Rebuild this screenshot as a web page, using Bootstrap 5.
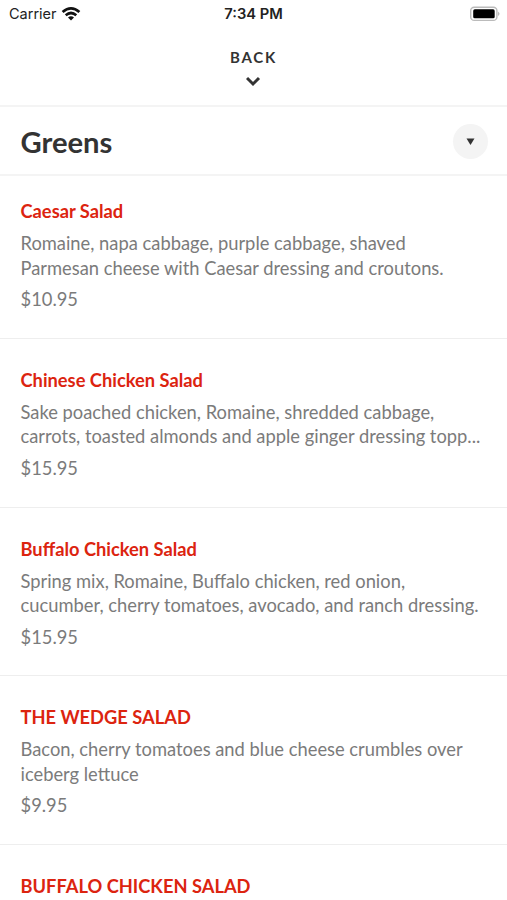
<!DOCTYPE html>
<html lang="en">
<head>
<meta charset="utf-8">
<meta name="viewport" content="width=device-width, initial-scale=1">
<title>Greens</title>
<link rel="stylesheet" href="https://cdn.jsdelivr.net/npm/bootstrap@5.3.0/dist/css/bootstrap.min.css">
<style>
body{font-family:Lato,sans-serif;color:#333;background:#fff;height:900px;overflow:hidden}
.status{height:28px;padding:0 7px 0 9px;font:14.5px/28px Inter,sans-serif;color:#222;grid-template-columns:1fr auto 1fr}
.status .time{font-weight:600;font-size:14.7px;margin-right:2px}
.back{height:79px;border-bottom:2px solid #f4f4f4;padding-top:18px;font-size:15px;line-height:22px;font-weight:700;letter-spacing:1.8px}
.back svg{margin-top:8px}
.heading{height:69px;border-bottom:2px solid #f4f4f4;padding:2px 19px 0 20.5px}
.heading h1{font-size:29.2px;font-weight:700;line-height:40px}
.round{width:35px;height:35px;background:#f4f4f4}
.dish{height:168.7px;padding:29.1px 0 0 20.5px;border-bottom:1px solid #eee}
.dish:first-child{height:162.9px;padding-top:23px}
.dish:last-child{height:auto;border:0}
.dish h2{font-size:18.3px;font-weight:700;line-height:24px;color:#dc240f;margin:0 0 8px}
.dish:last-child h2{margin:0}
.dish p{font-size:18.33px;line-height:24.5px;color:#7b7b7b;margin:0;white-space:nowrap}
.dish .price{margin-top:7px}
</style>
<script src="https://cdn.jsdelivr.net/npm/bootstrap@5.3.0/dist/js/bootstrap.bundle.min.js"></script>
</head>
<body>
<div class="status d-grid align-items-center">
<div class="d-flex align-items-center gap-1"><span>Carrier</span><svg width="20" height="16" viewBox="0 0 20 16" fill="none" stroke="#111" stroke-width="2.7"><path d="M1.6 6Q10-1.4 18.4 6M4.7 9.2Q10 4.8 15.3 9.2"/><path d="M10 14.5L7 11.4Q10 9.2 13 11.4Z" fill="#111" stroke="none"/></svg></div>
<span class="time">7:34 PM</span>
<svg class="ms-auto" width="30" height="16" viewBox="0 0 30 16"><rect x=".7" y="1.2" width="26.2" height="13.2" rx="3.5" fill="none" stroke="#bbb" stroke-width="1.4"/><rect x="3.2" y="3.3" width="21.5" height="9" rx="1.6" fill="#000"/><path d="M28 5.5q3 2.3 0 4.6z" fill="#bbb"/></svg>
</div>
<header class="back d-flex flex-column align-items-center"><span>BACK</span><svg width="15" height="12" viewBox="0 0 15 12" fill="none" stroke="#333" stroke-width="3"><path d="M1 2l6 6 6-6"/></svg></header>
<div class="heading d-flex align-items-center justify-content-between"><h1 class="m-0">Greens</h1><div class="round rounded-circle d-flex align-items-center justify-content-center"><svg width="9" height="7" viewBox="0 0 9 7"><path d="M.5 .5h8L4.5 7z" fill="#333"/></svg></div></div>
<main>
<article class="dish"><h2>Caesar Salad</h2><p>Romaine, napa cabbage, purple cabbage, shaved<br>Parmesan cheese with Caesar dressing and croutons.</p><p class="price">$10.95</p></article>
<article class="dish"><h2>Chinese Chicken Salad</h2><p>Sake poached chicken, Romaine, shredded cabbage,<br>carrots, toasted almonds and apple ginger dressing topp...</p><p class="price">$15.95</p></article>
<article class="dish"><h2>Buffalo Chicken Salad</h2><p>Spring mix, Romaine, Buffalo chicken, red onion,<br>cucumber, cherry tomatoes, avocado, and ranch dressing.</p><p class="price">$15.95</p></article>
<article class="dish"><h2>THE WEDGE SALAD</h2><p>Bacon, cherry tomatoes and blue cheese crumbles over<br>iceberg lettuce</p><p class="price">$9.95</p></article>
<article class="dish"><h2>BUFFALO CHICKEN SALAD</h2></article>
</main>
</body>
</html>
